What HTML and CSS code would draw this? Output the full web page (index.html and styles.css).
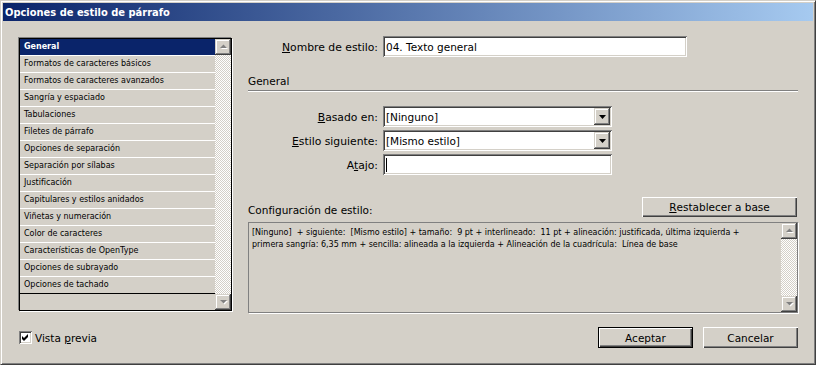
FILE: index.html
```html
<!DOCTYPE html>
<html lang="es">
<head>
<meta charset="utf-8">
<title>Opciones de estilo de párrafo</title>
<link rel="stylesheet" href="styles.css">
</head>
<body>
<div class="win">
  <div class="titlebar"><span class="title">Opciones de estilo de párrafo</span></div>
  <div class="content">
    <div class="main">
      <div class="listbox">
        <div class="list">
          <div class="row sel">General</div>
          <div class="row">Formatos de caracteres básicos</div>
          <div class="row">Formatos de caracteres avanzados</div>
          <div class="row">Sangría y espaciado</div>
          <div class="row">Tabulaciones</div>
          <div class="row">Filetes de párrafo</div>
          <div class="row">Opciones de separación</div>
          <div class="row">Separación por sílabas</div>
          <div class="row">Justificación</div>
          <div class="row">Capitulares y estilos anidados</div>
          <div class="row">Viñetas y numeración</div>
          <div class="row">Color de caracteres</div>
          <div class="row">Características de OpenType</div>
          <div class="row">Opciones de subrayado</div>
          <div class="row last">Opciones de tachado</div>
        </div>
        <div class="vscroll">
          <div class="sbtn"><svg width="9" height="6" viewBox="0 0 9 6"><polygon points="2,5 9,5 5.5,1.5" fill="#fff"/><polygon points="1,4 8,4 4.5,0.5" fill="#808080"/></svg></div>
          <div class="track"></div>
          <div class="sbtn"><svg width="9" height="6" viewBox="0 0 9 6"><polygon points="2,2 9,2 5.5,5.5" fill="#fff"/><polygon points="1,1 8,1 4.5,4.5" fill="#808080"/></svg></div>
        </div>
      </div>
      <div class="panel">
        <div class="field">
          <span class="lbl"><u>N</u>ombre de estilo:</span>
          <div class="input name">04. Texto general</div>
        </div>
        <div class="section">General</div>
        <div class="fields">
          <div class="field">
            <span class="lbl"><u>B</u>asado en:</span>
            <div class="input select"><span class="val">[Ninguno]</span><span class="dd"><svg width="7" height="4" viewBox="0 0 7 4"><polygon points="0,0 7,0 3.5,4" fill="#000"/></svg></span></div>
          </div>
          <div class="field">
            <span class="lbl"><u>E</u>stilo siguiente:</span>
            <div class="input select"><span class="val">[Mismo estilo]</span><span class="dd"><svg width="7" height="4" viewBox="0 0 7 4"><polygon points="0,0 7,0 3.5,4" fill="#000"/></svg></span></div>
          </div>
          <div class="field">
            <span class="lbl">A<u>t</u>ajo:</span>
            <div class="input short"><span class="caret"></span></div>
          </div>
        </div>
        <div class="cfg-head">
          <span class="cfg-lbl">Configuración de estilo:</span>
          <div class="btn reset"><u>R</u>establecer a base</div>
        </div>
        <div class="cfg">
          <div class="cfg-text">[Ninguno]  + siguiente:  [Mismo estilo] + tamaño:  9 pt + interlineado:  11 pt + alineación: justificada, última izquierda +<br>primera sangría: 6,35 mm + sencilla: alineada a la izquierda + Alineación de la cuadrícula:  Línea de base</div>
          <div class="vscroll">
            <div class="sbtn"><svg width="9" height="6" viewBox="0 0 9 6"><polygon points="2,5 9,5 5.5,1.5" fill="#fff"/><polygon points="1,4 8,4 4.5,0.5" fill="#808080"/></svg></div>
            <div class="track"></div>
            <div class="sbtn"><svg width="9" height="6" viewBox="0 0 9 6"><polygon points="2,2 9,2 5.5,5.5" fill="#fff"/><polygon points="1,1 8,1 4.5,4.5" fill="#808080"/></svg></div>
          </div>
        </div>
      </div>
    </div>
    <div class="footer">
      <div class="check">
        <span class="box"><svg width="9" height="9" viewBox="0 0 9 9"><polygon points="1,3 3,5 7,1 7,4 3,8 1,6" fill="#000"/></svg></span>
        <span>Vista <u>p</u>revia</span>
      </div>
      <div class="btns">
        <div class="btn default">Aceptar</div>
        <div class="btn">Cancelar</div>
      </div>
    </div>
  </div>
</div>
</body>
</html>
```
FILE: styles.css
```css
* { box-sizing: border-box; }
html, body { margin: 0; padding: 0; background: #d4d0c8; }
.win {
  width: 816px;
  height: 365px;
  background: #d4d0c8;
  border: 1px solid;
  border-color: #d4d0c8 #404040 #404040 #d4d0c8;
  box-shadow: inset 1px 1px #fff, inset -1px -1px #808080;
  padding: 2px;
  font-family: "DejaVu Sans", sans-serif;
  font-size: 10.5px;
  color: #000;
  display: flex;
  flex-direction: column;
}
.titlebar {
  height: 18px;
  background: linear-gradient(to right, #0a246a, #a6caf0);
  padding-left: 2px;
  display: flex;
  align-items: center;
}
.title {
  color: #fff;
  font-family: "DejaVu Sans Condensed", "DejaVu Sans", sans-serif;
  font-stretch: condensed;
  font-weight: bold;
  font-size: 11px;
}
.content {
  padding: 15px 15px 0 16px;
}
.main {
  display: flex;
  gap: 16px;
}
.listbox {
  margin-top: 2px;
  width: 213px;
  height: 273px;
  border: 1px solid #000;
  box-shadow: -1px -1px #808080, 1px 1px #fff;
  display: flex;
  background: #d4d0c8;
}
.list {
  flex: 1;
  display: flex;
  flex-direction: column;
}
.row {
  height: 17px;
  line-height: 16px;
  border-bottom: 1px solid #fff;
  padding-left: 4px;
  font-size: 8px;
  white-space: nowrap;
}
.row.sel {
  background: #0a246a;
  color: #fff;
  font-weight: bold;
}
.row.last { border-bottom-color: #000; }
.vscroll {
  width: 16px;
  display: flex;
  flex-direction: column;
}
.sbtn {
  width: 16px;
  height: 16px;
  background: #d4d0c8;
  box-shadow: inset -1px -1px #404040, inset 1px 1px #d4d0c8, inset -2px -2px #808080, inset 2px 2px #fff;
  display: flex;
  align-items: center;
  justify-content: center;
}
.track {
  flex: 1;
  background: repeating-conic-gradient(#fff 0 25%, #d4d0c8 0 50%) 0 0 / 2px 2px;
}
.panel {
  width: 550px;
  display: flex;
  flex-direction: column;
}
.field {
  display: flex;
  align-items: center;
  height: 21px;
}
.lbl {
  width: 135px;
  padding-right: 5px;
  text-align: right;
  white-space: nowrap;
  padding-top: 2px;
  font-size: 10.8px;
}
.input {
  height: 21px;
  background: #fff;
  box-shadow: inset 1px 1px #808080, inset -1px -1px #fff, inset 2px 2px #404040, inset -2px -2px #d4d0c8;
  padding: 2px 2px 2px 3px;
  display: flex;
  align-items: center;
  white-space: nowrap;
}
.input.name { width: 304px; }
.input.select, .input.short { width: 229px; }
.select .val { flex: 1; padding-top: 1px; }
.dd {
  width: 16px;
  height: 17px;
  background: #d4d0c8;
  box-shadow: inset -1px -1px #404040, inset 1px 1px #d4d0c8, inset -2px -2px #808080, inset 2px 2px #fff;
  display: flex;
  align-items: center;
  justify-content: center;
}
.caret {
  width: 1px;
  height: 14px;
  background: #000;
}
.section {
  margin-top: 17px;
  line-height: 14px;
  padding-bottom: 2px;
  border-bottom: 1px solid #808080;
  box-shadow: 0 1px #fff;
}
.fields {
  margin-top: 15px;
  display: flex;
  flex-direction: column;
  gap: 3px;
}
.cfg-head {
  margin-top: 22px;
  display: flex;
  justify-content: space-between;
  align-items: flex-end;
}
.cfg-lbl { line-height: 14px; }
.btn {
  height: 21px;
  width: 95px;
  background: #d4d0c8;
  box-shadow: inset 1px 1px #fff, inset -1px -1px #404040, inset -2px -2px #808080;
  display: flex;
  align-items: center;
  justify-content: center;
  white-space: nowrap;
}
.btn.reset {
  width: 155px;
  height: 20px;
  margin-right: 1px;
}
.btn.default {
  border: 1px solid #000;
}
.cfg {
  margin-top: 5px;
  height: 91px;
  border: 1px solid #808080;
  box-shadow: 1px 1px #fff;
  display: flex;
}
.cfg-text {
  flex: 1;
  padding: 4px 3px;
  font-size: 8px;
  line-height: 12px;
  white-space: pre;
  overflow: hidden;
}
.footer {
  margin-top: 14px;
  display: flex;
  justify-content: space-between;
  align-items: center;
}
.check {
  display: flex;
  align-items: center;
  gap: 3px;
}
.box {
  width: 13px;
  height: 13px;
  background: #fff;
  box-shadow: inset 1px 1px #808080, inset -1px -1px #fff, inset 2px 2px #404040, inset -2px -2px #d4d0c8;
  display: flex;
  align-items: center;
  justify-content: center;
}
.btns {
  display: flex;
  gap: 10px;
}
```
